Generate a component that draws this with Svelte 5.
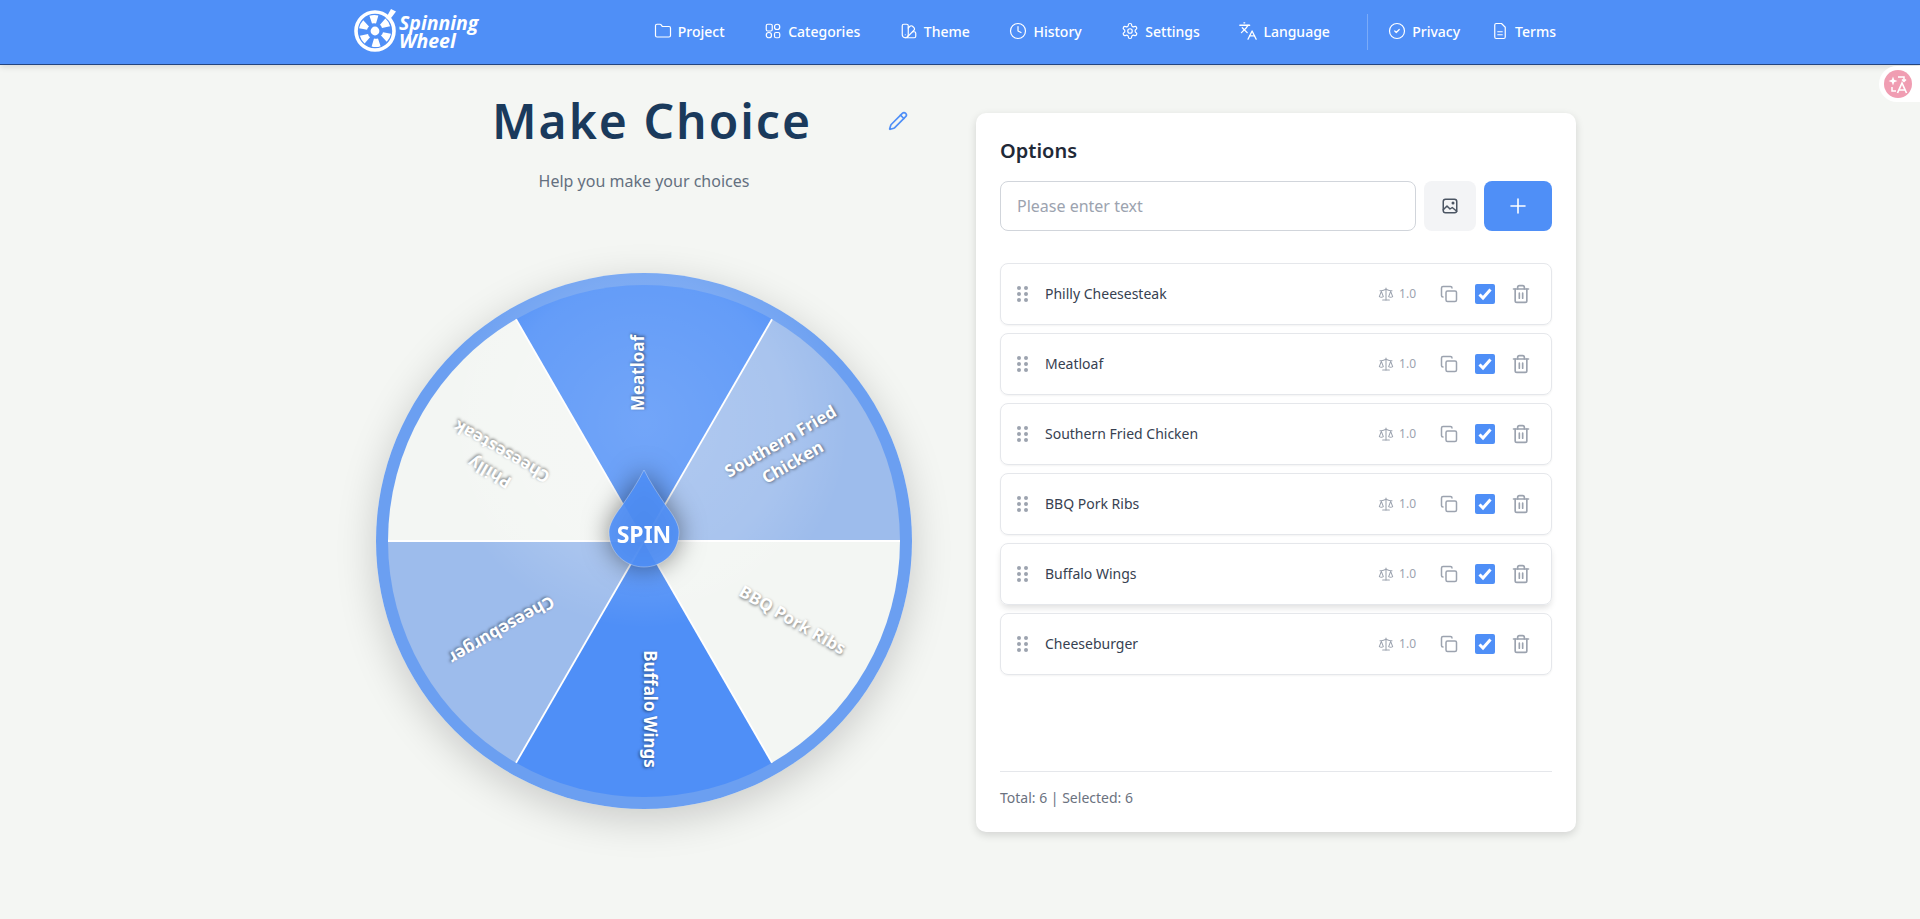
<script lang="ts">
    const navItems = [
        { label: 'Project', icon: 'folder' },
        { label: 'Categories', icon: 'grid' },
        { label: 'Theme', icon: 'swatch' },
        { label: 'History', icon: 'clock' },
        { label: 'Settings', icon: 'gear' },
        { label: 'Language', icon: 'lang' }
    ];
    const navLinks = [
        { label: 'Privacy', icon: 'check' },
        { label: 'Terms', icon: 'file' }
    ];

    const segments = [
        { label: 'Meatloaf', angle: -90, fill: '#4f8ff7' },
        { label: 'Southern Fried Chicken', angle: -30, fill: '#9dbcec' },
        { label: 'BBQ Pork Ribs', angle: 30, fill: '#f3f6f3' },
        { label: 'Buffalo Wings', angle: 90, fill: '#4f8ff7' },
        { label: 'Cheeseburger', angle: 150, fill: '#9dbcec' },
        { label: 'Philly Cheesesteak', angle: 210, fill: '#f3f6f3' }
    ];

    const options = ['Philly Cheesesteak', 'Meatloaf', 'Southern Fried Chicken', 'BBQ Pork Ribs', 'Buffalo Wings', 'Cheeseburger'];

    const R = 256;

    // wedge path in the wheel's 536 viewBox
    function wedge(angle: number) {
        const a = ((angle - 30) * Math.PI) / 180;
        const b = ((angle + 30) * Math.PI) / 180;
        const x1 = 268 + R * Math.cos(a);
        const y1 = 268 + R * Math.sin(a);
        const x2 = 268 + R * Math.cos(b);
        const y2 = 268 + R * Math.sin(b);
        return `M268 268L${x1} ${y1}A${R} ${R} 0 0 1 ${x2} ${y2}Z`;
    }

    // white line on the wedge's leading edge
    function edge(angle: number) {
        const a = ((angle - 30) * Math.PI) / 180;
        return `M268 268L${268 + R * Math.cos(a)} ${268 + R * Math.sin(a)}`;
    }
</script>

{#snippet navIcon(name: string)}
    <svg class="nav-icon" viewBox={name === 'lang' ? '1 1 22 22' : '0 0 24 24'} fill="none" stroke="currentColor" stroke-width="2" stroke-linecap="round" stroke-linejoin="round">
        {#if name === 'folder'}
            <path d="M20 20a2 2 0 0 0 2-2V8a2 2 0 0 0-2-2h-7.9a2 2 0 0 1-1.69-.9L9.6 3.9A2 2 0 0 0 7.93 3H4a2 2 0 0 0-2 2v13a2 2 0 0 0 2 2Z" />
        {:else if name === 'grid'}
            <rect x="3" y="3" width="8" height="9" rx="2" /><circle cx="17.5" cy="6.5" r="3.5" /><circle cx="6.5" cy="17.5" r="3.5" /><rect x="14" y="14" width="7" height="7" rx="2" />
        {:else if name === 'swatch'}
            <path d="M11 17a4 4 0 0 1-8 0V5a2 2 0 0 1 2-2h4a2 2 0 0 1 2 2Z" /><path d="M16.7 13H19a2 2 0 0 1 2 2v4a2 2 0 0 1-2 2H7" /><path d="M7 17h.01" /><path d="m11 8 2.3-2.3a2.4 2.4 0 0 1 3.404.004L18.6 7.6a2.4 2.4 0 0 1 .026 3.434L9.9 19.8" />
        {:else if name === 'clock'}
            <circle cx="12" cy="12" r="10" /><path d="M12 6v6l4 2" />
        {:else if name === 'gear'}
            <path d="M12.22 2h-.44a2 2 0 0 0-2 2v.18a2 2 0 0 1-1 1.73l-.43.25a2 2 0 0 1-2 0l-.15-.08a2 2 0 0 0-2.73.73l-.22.38a2 2 0 0 0 .73 2.73l.15.1a2 2 0 0 1 1 1.72v.51a2 2 0 0 1-1 1.74l-.15.09a2 2 0 0 0-.73 2.73l.22.38a2 2 0 0 0 2.73.73l.15-.08a2 2 0 0 1 2 0l.43.25a2 2 0 0 1 1 1.73V20a2 2 0 0 0 2 2h.44a2 2 0 0 0 2-2v-.18a2 2 0 0 1 1-1.73l.43-.25a2 2 0 0 1 2 0l.15.08a2 2 0 0 0 2.73-.73l.22-.39a2 2 0 0 0-.73-2.73l-.15-.08a2 2 0 0 1-1-1.74v-.5a2 2 0 0 1 1-1.74l.15-.09a2 2 0 0 0 .73-2.73l-.22-.38a2 2 0 0 0-2.73-.73l-.15.08a2 2 0 0 1-2 0l-.43-.25a2 2 0 0 1-1-1.73V4a2 2 0 0 0-2-2z" /><circle cx="12" cy="12" r="3" />
        {:else if name === 'lang'}
            <path d="m5 8 6 6" /><path d="m4 14 6-6 2-3" /><path d="M2 5h12" /><path d="M7 2h1" /><path d="m22 22-5-10-5 10" /><path d="M14 18h6" />
        {:else if name === 'check'}
            <circle cx="12" cy="12" r="10" /><path d="m9 12 2 2 4-4" />
        {:else if name === 'file'}
            <path d="M14 2H7a2 2 0 0 0-2 2v16a2 2 0 0 0 2 2h10a2 2 0 0 0 2-2V7Z" /><path d="M9 13h6" /><path d="M9 17h6" />
        {/if}
    </svg>
{/snippet}

<header class="navbar">
    <div class="nav-inner">
        <a class="logo" href="#top">
            <svg class="logo-mark" viewBox="0 0 46 46" fill="#fff">
                <circle cx="22" cy="24" r="19" fill="none" stroke="#fff" stroke-width="3.6" />
                <circle cx="22" cy="24" r="4.4" />
                <path d="M19 16.5 16.4 8.8a15 15 0 0 1 9-.3l-2.4 8a7 7 0 0 0-4 0Z" />
                <path d="M19 16.5 16.4 8.8a15 15 0 0 1 9-.3l-2.4 8a7 7 0 0 0-4 0Z" transform="rotate(60 22 24)" />
                <path d="M19 16.5 16.4 8.8a15 15 0 0 1 9-.3l-2.4 8a7 7 0 0 0-4 0Z" transform="rotate(120 22 24)" />
                <path d="M19 16.5 16.4 8.8a15 15 0 0 1 9-.3l-2.4 8a7 7 0 0 0-4 0Z" transform="rotate(180 22 24)" />
                <path d="M19 16.5 16.4 8.8a15 15 0 0 1 9-.3l-2.4 8a7 7 0 0 0-4 0Z" transform="rotate(240 22 24)" />
                <path d="M19 16.5 16.4 8.8a15 15 0 0 1 9-.3l-2.4 8a7 7 0 0 0-4 0Z" transform="rotate(300 22 24)" />
                <path d="M33 11 38 2l5 2.500-3 4-4 5Z" />
            </svg>
            <span class="logo-text">Spinning<br />Wheel</span>
        </a>
        <nav class="nav-links">
            {#each navItems as item}
                <a class="nav-link" href="#top">{@render navIcon(item.icon)}{item.label}</a>
            {/each}
            <span class="nav-divider"></span>
            {#each navLinks as item}
                <a class="nav-link small" href="#top">{@render navIcon(item.icon)}{item.label}</a>
            {/each}
        </nav>
    </div>
</header>

<div class="translate-pill">
    <svg viewBox="0 0 28 28" width="28" height="28">
        <circle cx="14" cy="14" r="14" fill="#f09db2" />
        <path d="M9 6.500l1.200 3.300 3.300 1.200-3.300 1.200L9 15.500l-1.200-3.300L4.500 11l3.300-1.200Z" fill="#fff" />
        <path d="M14 7h6v4M18 9.500 20 11.500 22 9.500M8 17v4h4" fill="none" stroke="#fff" stroke-width="1.500" />
        <path d="M13.500 23 18 13l4.500 10M15 20h6" fill="none" stroke="#fff" stroke-width="1.700" />
    </svg>
</div>

<main class="page">
    <section class="wheel-col">
        <div class="title-row">
            <h1>Make Choice</h1>
            <svg class="edit-icon" viewBox="0 0 24 24" fill="none" stroke="currentColor" stroke-width="2" stroke-linecap="round" stroke-linejoin="round">
                <path d="M21.174 6.812a1 1 0 0 0-3.986-3.987L3.842 16.174a2 2 0 0 0-.5.83l-1.321 4.352a.5.5 0 0 0 .623.622l4.353-1.32a2 2 0 0 0 .83-.497z" /><path d="m15 5 4 4" />
            </svg>
        </div>
        <p class="subtitle">Help you make your choices</p>

        <div class="wheel">
            <svg class="wheel-svg" viewBox="0 0 536 536">
                <defs>
                    <radialGradient id="shine" gradientUnits="userSpaceOnUse" cx="268" cy="150" r="205">
                        <stop offset="0" stop-color="#fff" stop-opacity="0.2" />
                        <stop offset="0.7" stop-color="#fff" stop-opacity="0.12" />
                        <stop offset="1" stop-color="#fff" stop-opacity="0" />
                    </radialGradient>
                </defs>
                <circle cx="268" cy="268" r="268" fill="#6b9ff1" />
                {#each segments as seg}
                    <path d={wedge(seg.angle)} fill={seg.fill} />
                {/each}
                {#each segments as seg}
                    <path d={edge(seg.angle)} stroke="#fff" stroke-width="1.8" />
                {/each}
                <circle cx="268" cy="268" r="268" fill="url(#shine)" />
            </svg>
            {#each segments as seg}
                <span class="seg-label" style="transform: translate(-50%, -50%) rotate({seg.angle}deg) translate(168px, -6px)">{seg.label}</span>
            {/each}
            <button class="spin">
                <svg viewBox="0 0 72 100" width="72" height="100">
                    <path d="M36 1C42 13 50 25 59 38 66 47 71 56 71 63 71 84 54 98 36 98 18 98 1 84 1 63 1 56 6 47 13 38 22 25 30 13 36 1Z" fill="#4f8ff7" fill-opacity="0.92" stroke="#fff" stroke-opacity="0.3" />
                </svg>
                <span class="spin-text">SPIN</span>
            </button>
        </div>
    </section>

    <section class="card">
        <h2>Options</h2>
        <div class="add-row">
            <input type="text" placeholder="Please enter text" />
            <button class="image-btn" aria-label="Add image">
                <svg viewBox="0 0 24 24" fill="none" stroke="currentColor" stroke-width="2" stroke-linecap="round" stroke-linejoin="round">
                    <rect x="3" y="3" width="18" height="18" rx="3" /><path d="M3 17l5-5 4 4 3-2 6 5" /><circle cx="16" cy="8" r="1" />
                </svg>
            </button>
            <button class="add-btn" aria-label="Add">
                <svg viewBox="0 0 24 24" fill="none" stroke="currentColor" stroke-width="2" stroke-linecap="round"><path d="M5 12h14M12 5v14" /></svg>
            </button>
        </div>

        <ul class="option-list">
            {#each options as option}
                <li class="option" class:hovered={option === 'Buffalo Wings'}>
                    <span class="handle">{#each Array(6) as _}<i></i>{/each}</span>
                    <span class="option-name">{option}</span>
                    <span class="weight">
                        <svg viewBox="0 0 24 24" fill="none" stroke="currentColor" stroke-width="2" stroke-linecap="round" stroke-linejoin="round">
                            <path d="m16 16 3-8 3 8c-.87.65-1.920 1-3 1s-2.130-.35-3-1Z" /><path d="m2 16 3-8 3 8c-.87.65-1.920 1-3 1s-2.130-.35-3-1Z" /><path d="M7 21h10" /><path d="M12 3v18" /><path d="M3 7h2c2 0 5-1 7-2 2 1 5 2 7 2h2" />
                        </svg>
                        <span class="weight-value">1.0</span>
                    </span>
                    <svg class="row-icon copy" viewBox="0 0 24 24" fill="none" stroke="currentColor" stroke-width="2" stroke-linecap="round" stroke-linejoin="round">
                        <rect x="8" y="8" width="14" height="14" rx="2" /><path d="M4 16c-1.100 0-2-.9-2-2V4c0-1.100.9-2 2-2h10c1.100 0 2 .9 2 2" />
                    </svg>
                    <span class="checkbox">
                        <svg viewBox="0 0 20 20" fill="none" stroke="#fff" stroke-width="3"><path d="M4.500 10.500 8 14l7.500-8.500" /></svg>
                    </span>
                    <svg class="row-icon trash" viewBox="0 0 24 24" fill="none" stroke="currentColor" stroke-width="2" stroke-linecap="round" stroke-linejoin="round">
                        <path d="M3 6h18" /><path d="M19 6v14c0 1-1 2-2 2H7c-1 0-2-1-2-2V6" /><path d="M8 6V4c0-1 1-2 2-2h4c1 0 2 1 2 2v2" /><path d="M10 11v6M14 11v6" />
                    </svg>
                </li>
            {/each}
        </ul>

        <footer class="card-footer">Total: 6 | Selected: 6</footer>
    </section>
</main>

<style>
    :global(html) {
        background: #f4f6f3;
    }

    :global(body) {
        margin: 0;
        min-height: 919px;
        background: #f4f6f3;
        font-family: "Noto Sans", "Liberation Sans", sans-serif;
        color: #1f2937;
    }

    .navbar {
        height: 64px;
        background: #4f8ff7;
        border-bottom: 1px solid #24457f;
        box-shadow: 0 2px 6px rgba(0, 0, 0, 0.12);
    }

    .nav-inner {
        max-width: 1216px;
        height: 100%;
        margin: 0 auto;
        display: flex;
        align-items: center;
        justify-content: space-between;
    }

    .logo {
        display: flex;
        align-items: center;
        color: #fff;
        text-decoration: none;
        margin-left: 1px;
    }

    .logo-mark {
        width: 46px;
        height: 46px;
        margin-top: -4px;
    }

    .logo-text {
        font-family: "Open Sans", sans-serif;
        font-style: italic;
        font-weight: 700;
        font-size: 19.5px;
        line-height: 18px;
    }

    .nav-links {
        display: flex;
        align-items: center;
        height: 100%;
    }

    .nav-link {
        display: flex;
        align-items: center;
        gap: 6px;
        padding: 0 19.8px 2px;
        color: #fff;
        font-size: 14px;
        font-weight: 500;
        text-decoration: none;
    }

    .nav-link.small {
        padding: 0 15.5px 2px;
    }

    .nav-link:last-child {
        padding-right: 12px;
    }

    .nav-icon {
        width: 18px;
        height: 18px;
        stroke-width: 1.6;
    }

    .nav-divider {
        width: 1px;
        height: 36px;
        background: rgba(255, 255, 255, 0.25);
        margin: 0 5px 0 17px;
    }

    .translate-pill {
        position: absolute;
        top: 66px;
        right: 0;
        width: 41px;
        height: 36px;
        display: flex;
        align-items: center;
        padding-left: 5px;
        box-sizing: border-box;
        background: #fff;
        border-radius: 18px 0 0 18px;
    }

    .page {
        width: 1232px;
        margin: 0 auto;
        padding: 32px 0 0 0;
        display: grid;
        grid-template-columns: 600px 600px;
        gap: 32px;
    }

    .wheel-col {
        display: flex;
        flex-direction: column;
        align-items: center;
    }

    .title-row {
        position: relative;
        display: flex;
        justify-content: center;
        width: 100%;
    }

    h1 {
        margin: 0 0 0 16px;
        font-size: 48px;
        line-height: 48px;
        font-weight: 600;
        letter-spacing: 2px;
        color: #1a3a5c;
    }

    .edit-icon {
        position: absolute;
        left: 544px;
        top: 14px;
        width: 20px;
        height: 20px;
        color: #4f8ff7;
    }

    .subtitle {
        margin: 24px 0 0;
        font-size: 16px;
        line-height: 24px;
        color: #64707f;
    }

    .wheel {
        position: relative;
        width: 536px;
        height: 536px;
        margin-top: 80px;
        border-radius: 50%;
        box-shadow: 0 10px 40px rgba(0, 0, 0, 0.18);
    }

    .wheel-svg {
        display: block;
        width: 100%;
        height: 100%;
    }

    .seg-label {
        position: absolute;
        left: 50%;
        top: 50%;
        width: 132px;
        text-align: center;
        color: #fff;
        font-size: 17px;
        font-weight: 700;
        line-height: 24px;
        text-shadow: 1px 1px 3px rgba(0, 0, 0, 0.5);
    }

    .spin {
        position: absolute;
        left: 232px;
        top: 196px;
        width: 72px;
        height: 100px;
        padding: 0;
        background: none;
        border: none;
        filter: drop-shadow(0 0 13px rgba(0, 0, 0, 0.5));
    }

    .spin svg {
        display: block;
    }

    .spin-text {
        position: absolute;
        left: 0;
        right: 0;
        top: 50px;
        text-align: center;
        color: #fff;
        font-family: "Noto Sans", sans-serif;
        font-size: 23px;
        line-height: 30px;
        font-weight: 700;
    }

    .card {
        display: flex;
        flex-direction: column;
        box-sizing: border-box;
        height: 719px;
        margin-top: 16px;
        padding: 24px;
        background: #fff;
        border-radius: 10px;
        box-shadow: 0 3px 9px rgba(0, 0, 0, 0.14);
    }

    h2 {
        margin: 0;
        font-size: 20px;
        line-height: 28px;
        font-weight: 600;
        color: #1f2937;
    }

    .add-row {
        display: flex;
        gap: 8px;
        margin-top: 16px;
    }

    input {
        flex: 1;
        min-width: 0;
        height: 50px;
        box-sizing: border-box;
        padding: 0 16px;
        border: 1px solid #d1d5db;
        border-radius: 8px;
        font: inherit;
        font-size: 16px;
    }

    input::placeholder {
        color: #9ca3af;
    }

    .image-btn,
    .add-btn {
        display: flex;
        align-items: center;
        justify-content: center;
        height: 50px;
        border: none;
        padding: 0;
        border-radius: 8px;
    }

    .image-btn {
        width: 52px;
        background: #f3f4f6;
        color: #4b5563;
    }

    .image-btn svg {
        width: 18px;
        height: 18px;
    }

    .add-btn {
        width: 68px;
        background: #4f8ff7;
        color: #fff;
    }

    .add-btn svg {
        width: 24px;
        height: 24px;
        stroke-width: 1.6;
    }

    .option-list {
        flex: 1;
        list-style: none;
        margin: 32px 0 0;
        padding: 0;
        display: flex;
        flex-direction: column;
        gap: 8px;
    }

    .option {
        display: flex;
        align-items: center;
        box-sizing: border-box;
        height: 62px;
        padding: 0 16px;
        border: 1px solid #e5e7eb;
        border-radius: 8px;
        box-shadow: 0 1px 2px rgba(0, 0, 0, 0.05);
    }

    .option.hovered {
        box-shadow: 0 4px 6px -1px rgba(0, 0, 0, 0.12);
    }

    .handle {
        display: grid;
        grid-template-columns: 4px 4px;
        gap: 2px 3px;
        color: #9ca3af;
        margin-right: 17px;
    }

    .handle i {
        display: block;
        width: 4px;
        height: 4px;
        border-radius: 50%;
        background: currentColor;
    }

    .option-name {
        flex: 1;
        padding-bottom: 2px;
        font-size: 14px;
        color: #374151;
    }

    .weight {
        display: flex;
        align-items: center;
        gap: 5px;
        font-size: 12px;
        color: #9ca3af;
    }

    .weight-value {
        padding-bottom: 2px;
    }

    .weight svg {
        width: 16px;
        height: 16px;
        stroke-width: 1.6;
    }

    .row-icon {
        color: #9ca3af;
    }

    .copy {
        width: 18px;
        height: 18px;
        margin-left: 24px;
    }

    .checkbox {
        width: 20px;
        height: 20px;
        margin-left: 17px;
        background: #4f8ff7;
        border-radius: 2px;
    }

    .checkbox svg {
        display: block;
    }

    .trash {
        width: 20px;
        height: 20px;
        margin-left: 16px;
        margin-right: 4px;
    }

    .card-footer {
        border-top: 1px solid #e5e7eb;
        padding-top: 16px;
        font-size: 14px;
        line-height: 20px;
        color: #6b7280;
    }
</style>
